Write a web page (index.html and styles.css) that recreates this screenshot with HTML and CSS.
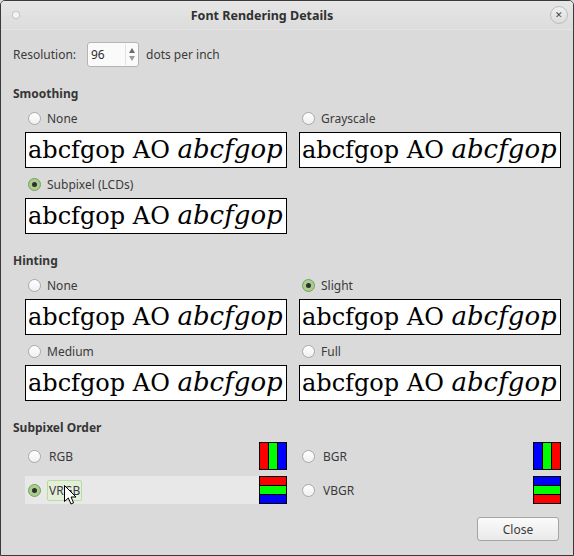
FILE: index.html
```
<!DOCTYPE html>
<html lang="en">
<head>
    <meta charset="UTF-8">
    <title>Font Rendering Details</title>
    <link rel="stylesheet" href="styles.css">
</head>
<body>
<div class="window">
    <div class="titlebar">
        <span class="tb-dot"></span>
        <span class="tb-title">Font Rendering Details</span>
        <span class="tb-close">&#x2715;</span>
    </div>

    <div class="content">
        <div class="res-row">
            <span class="res-label">Resolution:</span>
            <div class="spin">
                <span class="spin-value">96</span>
                <span class="spin-arrows"><i class="up"></i><i class="down"></i></span>
            </div>
            <span class="res-unit">dots per inch</span>
        </div>

        <!-- smoothing -->
        <div class="section">
            <h2>Smoothing</h2>
            <div class="options">
                <div class="option">
                    <label class="radio-row"><span class="radio"></span>None</label>
                    <div class="sample">abcfgop AO <em>abcfgop</em></div>
                </div>
                <div class="option">
                    <label class="radio-row"><span class="radio"></span>Grayscale</label>
                    <div class="sample">abcfgop AO <em>abcfgop</em></div>
                </div>
                <div class="option">
                    <label class="radio-row"><span class="radio checked"></span>Subpixel (LCDs)</label>
                    <div class="sample">abcfgop AO <em>abcfgop</em></div>
                </div>
            </div>
        </div>

        <!-- hinting -->
        <div class="section">
            <h2>Hinting</h2>
            <div class="options">
                <div class="option">
                    <label class="radio-row"><span class="radio"></span>None</label>
                    <div class="sample">abcfgop AO <em>abcfgop</em></div>
                </div>
                <div class="option">
                    <label class="radio-row"><span class="radio checked"></span>Slight</label>
                    <div class="sample">abcfgop AO <em>abcfgop</em></div>
                </div>
                <div class="option">
                    <label class="radio-row"><span class="radio"></span>Medium</label>
                    <div class="sample">abcfgop AO <em>abcfgop</em></div>
                </div>
                <div class="option">
                    <label class="radio-row"><span class="radio"></span>Full</label>
                    <div class="sample">abcfgop AO <em>abcfgop</em></div>
                </div>
            </div>
        </div>

        <!-- subpixel order -->
        <div class="section">
            <h2>Subpixel Order</h2>
            <div class="options">
                <div class="order-row">
                    <span class="radio"></span><span class="order-label">RGB</span>
                    <svg class="order-icon" width="28" height="28" viewBox="0 0 28 28">
                        <rect x="0" y="0" width="28" height="28" fill="#000"/>
                        <rect x="1" y="1" width="8" height="26" fill="#ff0000"/>
                        <rect x="10" y="1" width="8" height="26" fill="#00ff00"/>
                        <rect x="19" y="1" width="8" height="26" fill="#0000ff"/>
                    </svg>
                </div>
                <div class="order-row">
                    <span class="radio"></span><span class="order-label">BGR</span>
                    <svg class="order-icon" width="28" height="28" viewBox="0 0 28 28">
                        <rect x="0" y="0" width="28" height="28" fill="#000"/>
                        <rect x="1" y="1" width="8" height="26" fill="#0000ff"/>
                        <rect x="10" y="1" width="8" height="26" fill="#00ff00"/>
                        <rect x="19" y="1" width="8" height="26" fill="#ff0000"/>
                    </svg>
                </div>
                <div class="order-row hover">
                    <span class="radio checked"></span><span class="order-label focus">VRGB</span>
                    <svg class="order-icon" width="28" height="28" viewBox="0 0 28 28">
                        <rect x="0" y="0" width="28" height="28" fill="#000"/>
                        <rect x="1" y="1" width="26" height="8" fill="#ff0000"/>
                        <rect x="1" y="10" width="26" height="8" fill="#00ff00"/>
                        <rect x="1" y="19" width="26" height="8" fill="#0000ff"/>
                    </svg>
                    <svg class="cursor" width="13" height="20" viewBox="0 0 13 20">
                        <path d="M0.5 0.5 L0.5 16.5 L4.3 13 L7 19 L9.6 17.8 L7 12 L12 12 Z" fill="#fff" stroke="#000" stroke-width="1" stroke-linejoin="round"/>
                    </svg>
                </div>
                <div class="order-row">
                    <span class="radio"></span><span class="order-label">VBGR</span>
                    <svg class="order-icon" width="28" height="28" viewBox="0 0 28 28">
                        <rect x="0" y="0" width="28" height="28" fill="#000"/>
                        <rect x="1" y="1" width="26" height="8" fill="#0000ff"/>
                        <rect x="1" y="10" width="26" height="8" fill="#00ff00"/>
                        <rect x="1" y="19" width="26" height="8" fill="#ff0000"/>
                    </svg>
                </div>
            </div>
        </div>

        <div class="footer">
            <button class="close-btn">Close</button>
        </div>
    </div>
</div>
</body>
</html>
```

FILE: styles.css
```
html, body {
    margin: 0;
    padding: 0;
    background: #dadada;
}

.window {
    width: 574px;
    height: 556px;
    box-sizing: border-box;
    border: 1px solid #3a3a3a;
    border-radius: 5px 5px 0 0;
    background: #dadada;
    font-family: "Noto Sans", "Open Sans", sans-serif;
    font-size: 12px;
    color: #3a3a3a;
    overflow: hidden;
}

/* title bar */
.titlebar {
    height: 28px;
    display: flex;
    align-items: center;
    justify-content: center;
    padding-right: 50px;
    position: relative;
    background: linear-gradient(#e6e6e6, #dcdcdc);
    border-bottom: 1px solid #e4e4e4;
}

.tb-title {
    font-weight: bold;
    font-size: 12.5px;
    color: #303030;
}

.tb-dot {
    position: absolute;
    left: 12px;
    top: 11px;
    width: 6px;
    height: 6px;
    border-radius: 50%;
    background: #f4f4f4;
    box-shadow: 0 0 1px 1px #c4c4c4;
}

.tb-close {
    position: absolute;
    right: 5px;
    top: 5px;
    width: 16px;
    height: 16px;
    border-radius: 50%;
    border: 1px solid #bdbdbd;
    background: linear-gradient(#f0f0f0, #dddddd);
    font-size: 9px;
    line-height: 16px;
    text-align: center;
    color: #444;
}

.content {
    padding: 12px 12px 0 12px;
}

/* resolution */
.res-row {
    display: flex;
    align-items: center;
    height: 25px;
}

.res-label {
    width: 74px;
}

.spin {
    width: 52px;
    height: 25px;
    box-sizing: border-box;
    border: 1px solid #b4b4b4;
    border-radius: 3px;
    background: #fafafa;
    display: flex;
    align-items: center;
}

.spin-value {
    flex: 1;
    padding-left: 3px;
    color: #2a2a2a;
}

.spin-arrows {
    width: 12px;
    height: 21px;
    border-left: 1px solid #e2e2e2;
    display: flex;
    flex-direction: column;
    align-items: center;
    justify-content: center;
    gap: 3px;
}

.spin-arrows i {
    width: 0;
    height: 0;
    border-left: 3px solid transparent;
    border-right: 3px solid transparent;
}

.spin-arrows .up {
    border-bottom: 5px solid #6a6a6a;
}

.spin-arrows .down {
    border-top: 5px solid #9a9a9a;
}

.res-unit {
    margin-left: 7px;
}

/* sections */
.section {
    margin-top: 18px;
}

.section h2 {
    margin: 0 0 6px 0;
    font-size: 12px;
    line-height: 17px;
    font-weight: bold;
    color: #363636;
}

.options {
    display: grid;
    grid-template-columns: 262px 262px;
    column-gap: 12px;
    row-gap: 6px;
    margin-left: 12px;
}

.radio-row {
    display: flex;
    align-items: center;
    height: 20px;
    margin-bottom: 4px;
    padding-left: 3px;
}

.radio {
    width: 13px;
    height: 13px;
    box-sizing: border-box;
    border-radius: 50%;
    border: 1px solid #a9a9a9;
    background: linear-gradient(#ffffff, #f0f0f0);
    margin-right: 6px;
    flex: none;
    position: relative;
}

.radio.checked {
    border-color: #76a05a;
    background: #a9cd8f;
}

.radio.checked::after {
    content: "";
    position: absolute;
    left: 3px;
    top: 3px;
    width: 5px;
    height: 5px;
    border-radius: 50%;
    background: #2f2f2f;
}

.sample {
    height: 36px;
    box-sizing: border-box;
    border: 1px solid #000;
    background: #fff;
    font-family: "DejaVu Serif", serif;
    font-size: 24px;
    line-height: 32px;
    color: #000;
    padding-left: 2px;
    white-space: nowrap;
    overflow: hidden;
}

.sample em {
    font-size: 26px;
}

/* subpixel order */
.order-row {
    display: flex;
    align-items: center;
    height: 28px;
    padding-left: 3px;
    position: relative;
}

.order-row.hover {
    background: #e8e8e8;
}

.order-label {
    padding: 1px 1px;
    border: 1px solid transparent;
}

.order-label.focus {
    border-color: #b9dca0;
    border-radius: 2px;
    background: #e4efda;
}

.order-icon {
    margin-left: auto;
    display: block;
}

.cursor {
    position: absolute;
    left: 39px;
    top: 9px;
}

/* footer */
.footer {
    display: flex;
    justify-content: flex-end;
    margin-top: 13px;
}

.close-btn {
    width: 82px;
    height: 24px;
    margin-right: 2px;
    border: 1px solid #a4a4a4;
    border-radius: 3px;
    background: linear-gradient(#fbfbfb, #e9e9e9);
    font-family: "Noto Sans", "Open Sans", sans-serif;
    font-size: 12px;
    color: #3a3a3a;
    padding: 0;
}
```
